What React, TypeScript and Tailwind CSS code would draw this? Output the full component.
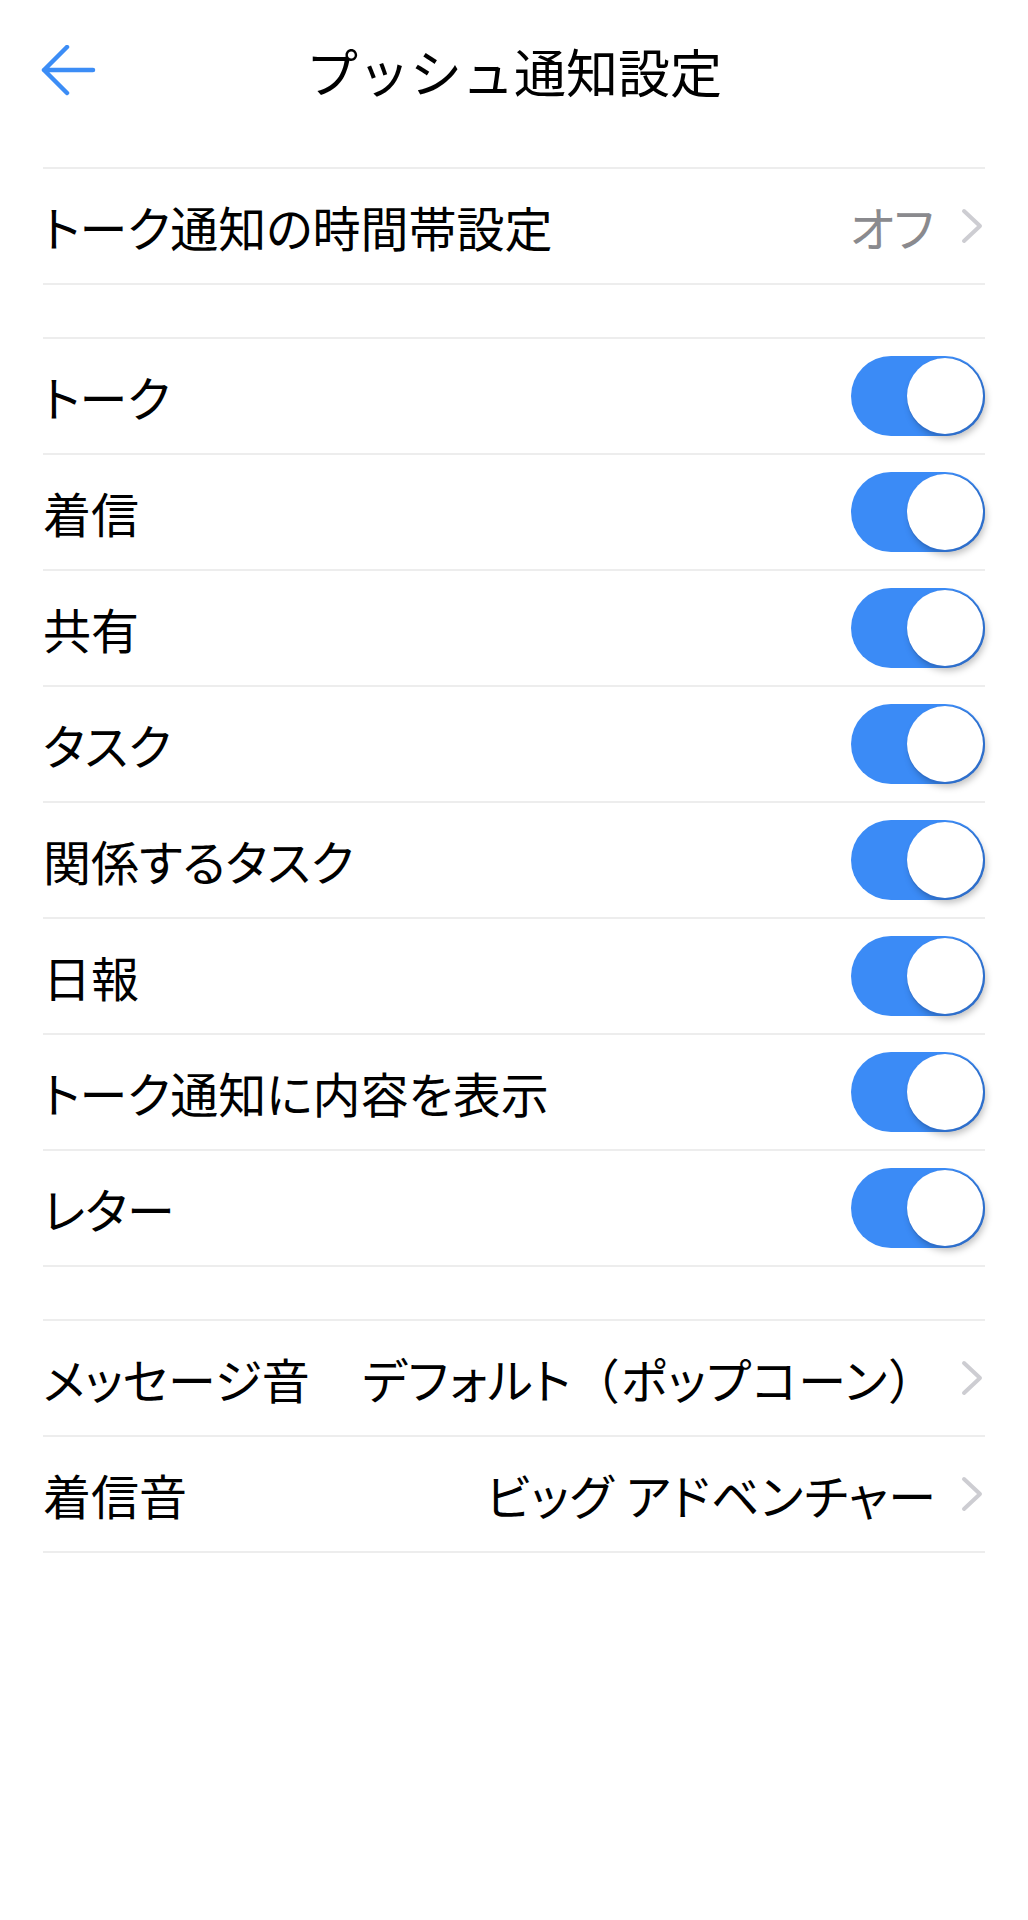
import React from 'react';

const font = { fontFamily: '"Noto Sans CJK JP", "Noto Sans", sans-serif' };

const toggles = [
  'トーク',
  '着信',
  '共有',
  'タスク',
  '関係するタスク',
  '日報',
  'トーク通知に内容を表示',
  'レター',
];

function Chevron() {
  return (
    <svg width="26" height="36" viewBox="0 0 26 36" className="shrink-0">
      <polyline
        points="5,3 21,18 5,33"
        fill="none"
        stroke="#cdcdd2"
        strokeWidth="4"
        strokeLinecap="round"
        strokeLinejoin="round"
      />
    </svg>
  );
}

function Toggle() {
  return (
    <div className="relative w-[134px] h-[80px] rounded-full bg-[#3b8bf6] shrink-0">
      <div className="absolute right-[2px] top-[2px] w-[76px] h-[76px] rounded-full bg-white shadow-[1px_1px_0_1px_#2e6fcc,3px_5px_7px_rgba(0,0,0,0.25)]" />
    </div>
  );
}

function Row({ children }: { children: React.ReactNode }) {
  return (
    <div className="h-[116px] flex items-center justify-between border-b-2 border-[#ededed] whitespace-nowrap text-[48px] leading-none [font-feature-settings:'palt']">
      {children}
    </div>
  );
}

export default function App() {
  return (
    <div className="w-[1028px] min-h-[1920px] bg-white text-black" style={font}>
      <div className="h-[142px] flex items-center">
        <div className="w-[110px] pl-[41px] flex items-center">
          <svg width="56" height="52" viewBox="0 0 56 52">
            <path
              d="M3 25 H52 M26 2 L3 25 L26 48"
              fill="none"
              stroke="#3c8df6"
              strokeWidth="4.5"
              strokeLinecap="round"
              strokeLinejoin="round"
            />
          </svg>
        </div>
        <div className="flex-1 text-center text-[52px] leading-none">プッシュ通知設定</div>
        <div className="w-[110px]" />
      </div>

      <div className="mx-[43px] mt-[25px] border-t-2 border-[#ededed]">
        <Row>
          <span>トーク通知の時間帯設定</span>
          <div className="flex items-center gap-[25px]">
            <span className="text-[#8a8a8e]">オフ</span>
            <Chevron />
          </div>
        </Row>
      </div>

      <div className="mx-[43px] mt-[52px] border-t-2 border-[#ededed]">
        {toggles.map((t) => (
          <Row key={t}>
            <span>{t}</span>
            <Toggle />
          </Row>
        ))}
      </div>

      <div className="mx-[43px] mt-[52px] border-t-2 border-[#ededed]">
        <Row>
          <span>メッセージ音</span>
          <div className="flex items-center gap-[22px]">
            <span className="tracking-[1px]">
              デフォルト<span className="[font-feature-settings:normal]">（</span>ポップコーン
              <span className="[font-feature-settings:normal]">）</span>
            </span>
            <Chevron />
          </div>
        </Row>
        <Row>
          <span>着信音</span>
          <div className="flex items-center gap-[22px]">
            <span className="tracking-[1px]">ビッグ アドベンチャー</span>
            <Chevron />
          </div>
        </Row>
      </div>
    </div>
  );
}
